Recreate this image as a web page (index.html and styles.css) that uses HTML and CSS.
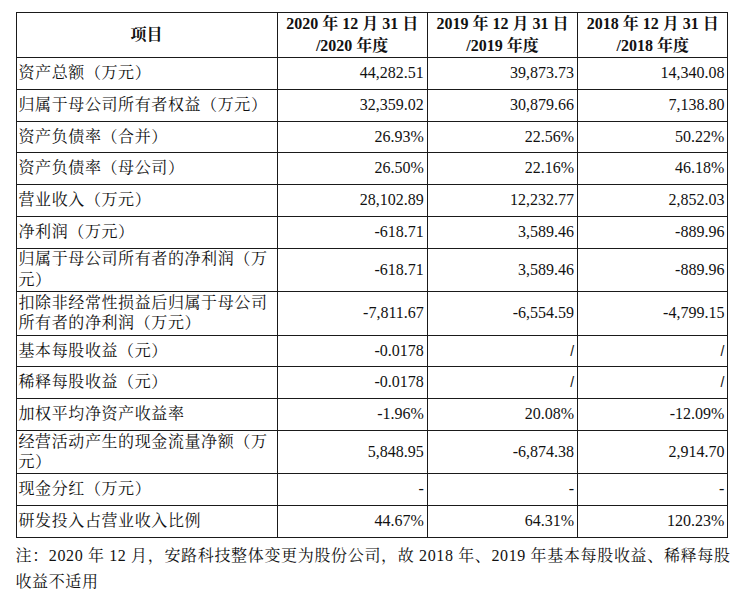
FILE: index.html
```html
<!DOCTYPE html>
<html lang="zh">
<head>
<meta charset="utf-8">
<title>主要财务数据</title>
<link rel="stylesheet" href="styles.css">
</head>
<body>
<div class="page">
  <table class="fin">
    <colgroup>
      <col class="c-label">
      <col class="c-num">
      <col class="c-num">
      <col class="c-num">
    </colgroup>
    <thead>
      <tr class="head">
        <th>项目</th>
        <th>2020 年 12 月 31 日<br>/2020 年度</th>
        <th>2019 年 12 月 31 日<br>/2019 年度</th>
        <th>2018 年 12 月 31 日<br>/2018 年度</th>
      </tr>
    </thead>
    <tbody>
      <tr class="r1"><td class="lab">资产总额（万元）</td><td>44,282.51</td><td>39,873.73</td><td>14,340.08</td></tr>
      <tr class="r1"><td class="lab">归属于母公司所有者权益（万元）</td><td>32,359.02</td><td>30,879.66</td><td>7,138.80</td></tr>
      <tr class="r1"><td class="lab">资产负债率（合并）</td><td>26.93%</td><td>22.56%</td><td>50.22%</td></tr>
      <tr class="r1"><td class="lab">资产负债率（母公司）</td><td>26.50%</td><td>22.16%</td><td>46.18%</td></tr>
      <tr class="r1"><td class="lab">营业收入（万元）</td><td>28,102.89</td><td>12,232.77</td><td>2,852.03</td></tr>
      <tr class="r1"><td class="lab">净利润（万元）</td><td>-618.71</td><td>3,589.46</td><td>-889.96</td></tr>
      <tr class="r2"><td class="lab">归属于母公司所有者的净利润（万元）</td><td>-618.71</td><td>3,589.46</td><td>-889.96</td></tr>
      <tr class="r2"><td class="lab">扣除非经常性损益后归属于母公司所有者的净利润（万元）</td><td>-7,811.67</td><td>-6,554.59</td><td>-4,799.15</td></tr>
      <tr class="r1"><td class="lab">基本每股收益（元）</td><td>-0.0178</td><td class="na">/</td><td class="na">/</td></tr>
      <tr class="r1"><td class="lab">稀释每股收益（元）</td><td>-0.0178</td><td class="na">/</td><td class="na">/</td></tr>
      <tr class="r1"><td class="lab">加权平均净资产收益率</td><td>-1.96%</td><td>20.08%</td><td>-12.09%</td></tr>
      <tr class="r2"><td class="lab">经营活动产生的现金流量净额（万元）</td><td>5,848.95</td><td>-6,874.38</td><td>2,914.70</td></tr>
      <tr class="r1"><td class="lab">现金分红（万元）</td><td>-</td><td>-</td><td>-</td></tr>
      <tr class="r1"><td class="lab">研发投入占营业收入比例</td><td>44.67%</td><td>64.31%</td><td>120.23%</td></tr>
    </tbody>
  </table>
  <p class="note">注：2020 年 12 月，安路科技整体变更为股份公司，故 2018 年、2019 年基本每股收益、稀释每股收益不适用</p>
</div>
</body>
</html>
```

FILE: styles.css
```css
html, body {
  margin: 0;
  padding: 0;
  background: #ffffff;
}

body {
  font-family: "Liberation Serif", "Noto Serif CJK SC", "Noto Sans CJK SC", serif;
  font-size: 16px;
  color: #111111;
}

.page {
  padding: 12px 10px 0 15.5px;
}

.fin {
  border-collapse: collapse;
  table-layout: fixed;
  width: 712px;
}

.c-label { width: 261px; }
.c-num { width: 150.3px; }

.fin th,
.fin td {
  border: 1px solid #1a1a1a;
  padding: 0 3px 0 2px;
  line-height: 20.5px;
  vertical-align: middle;
}

.fin th {
  font-weight: bold;
  text-align: center;
  line-height: 22px;
  padding: 0;
}

.head { height: 43px; }
.r1 { height: 31.75px; }
.r2 { height: 43.5px; }

.fin td {
  text-align: right;
  white-space: nowrap;
}

.fin td.lab {
  text-align: left;
  white-space: normal;
  letter-spacing: 0.6px;
  padding-left: 2px;
  padding-right: 2px;
}

.fin td.na {
  font-family: "Liberation Sans", sans-serif;
  font-size: 14px;
}

.note {
  margin: 5px 0 0 0;
  width: 715px;
  line-height: 26px;
  letter-spacing: 0.6px;
  text-align: justify;
}
```
